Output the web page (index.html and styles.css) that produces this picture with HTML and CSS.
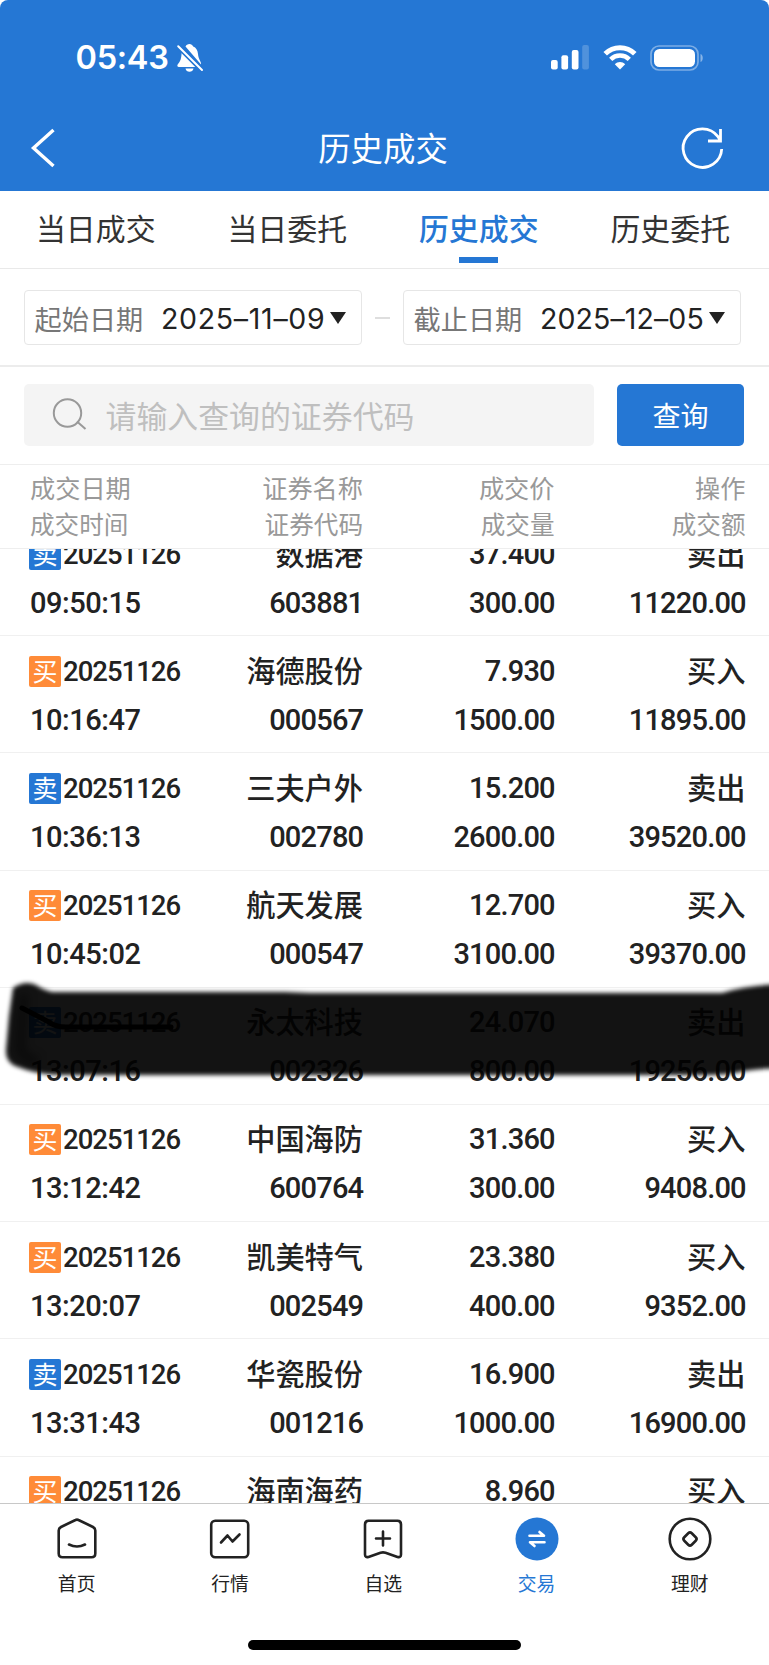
FILE: index.html
```html
<!DOCTYPE html>
<html lang="zh-CN">
<head>
<meta charset="utf-8">
<title>历史成交</title>
<link rel="stylesheet" href="styles.css">
</head>
<body>
<div class="app">
  <header class="header">
    <div class="status">
      <div class="status-left">
        <span class="clock">05:43</span>
        <svg class="bell" width="28" height="30" viewBox="0 0 28 30">
          <path fill="#fff" d="M13.500 1c-1.900 0-3.400 1-4 2.400L25 21.500c.8-2.500-2.600-4.500-3-10.500-.4-4-2-6.600-4.800-7.600C16.500 1.900 15.200 1 13.500 1zM5.600 10L19.500 24H3c-1.800 0-2.200-1.700-1-3 2.400-2.500 3.300-5.500 3.600-11zM9.500 25.500h8c-.5 2.200-2 3.300-4 3.300s-3.500-1.100-4-3.300z"/>
          <path d="M2.200 3.200L26 27" stroke="#2577d4" stroke-width="5"/>
          <path d="M2.200 3.200L26 27" stroke="#fff" stroke-width="2" stroke-linecap="round"/>
        </svg>
      </div>
      <div class="status-right">
        <svg width="38" height="25" viewBox="0 0 38 25" fill="#fff">
          <rect x="0" y="15" width="6.700" height="9.500" rx="2"/>
          <rect x="10.400" y="10.300" width="6.700" height="14.200" rx="2"/>
          <rect x="20.800" y="5" width="6.700" height="19.500" rx="2"/>
          <rect x="31.200" y="0" width="6.700" height="24.500" rx="2" opacity=".2"/>
        </svg>
        <svg class="wifi" width="34" height="25" viewBox="0 0 34 25" fill="none" stroke="#fff">
          <path d="M2.200 8.800C10.400.6 23.600.6 31.800 8.800" stroke-width="5"/>
          <path d="M7.700 14.300C12.900 9.300 21.100 9.300 26.300 14.300" stroke-width="4.600"/>
          <path d="M11.800 19.200c3-3.100 7.400-3.100 10.400 0L17 24.600z" fill="#fff" stroke="none"/>
        </svg>
        <svg class="battery" width="54" height="26" viewBox="0 0 54 26">
          <rect x="1" y="1" width="47" height="24" rx="8" fill="none" stroke="#fff" stroke-opacity=".4" stroke-width="1.700"/>
          <rect x="4" y="4" width="41" height="18" rx="5.500" fill="#fff"/>
          <path d="M50.500 9v8c3-1 3-7 0-8z" fill="#fff" opacity=".45"/>
        </svg>
      </div>
    </div>
    <div class="titlebar">
      <svg width="48" height="44" viewBox="0 0 48 44" fill="none" stroke="#fff" stroke-width="3.400"><path d="M24.500 4L4.500 22 24.500 40"/></svg>
      <h1 class="title">历史成交</h1>
      <svg width="48" height="44" viewBox="0 0 48 44" fill="none" stroke="#fff" stroke-width="2.800">
        <path d="M44.700 23A19.300 19.300 0 1 1 41 10.700L43.500 14.500M43.500 3V15H31"/>
      </svg>
    </div>
  </header>

  <nav class="tabs">
    <span class="tab">当日成交</span>
    <span class="tab">当日委托</span>
    <span class="tab tab-active">历史成交</span>
    <span class="tab">历史委托</span>
  </nav>

  <section class="dates">
    <div class="date"><span class="date-label">起始日期</span><span class="date-value date-from">2025–11–09</span><i class="caret"></i></div>
    <i class="dash"></i>
    <div class="date"><span class="date-label">截止日期</span><span class="date-value">2025–12–05</span><i class="caret"></i></div>
  </section>

  <section class="search">
    <div class="search-box">
      <svg width="36" height="36" viewBox="0 0 36 36" fill="none" stroke="#999" stroke-width="2"><circle cx="16.500" cy="16" r="13.700"/><path d="M26 24.500L34.500 32"/></svg>
      <span class="placeholder">请输入查询的证券代码</span>
    </div>
    <button class="query">查询</button>
  </section>

  <section class="thead">
    <div class="cell"><span>成交日期</span><span class="sub">成交时间</span></div>
    <div class="cell"><span>证券名称</span><span class="sub">证券代码</span></div>
    <div class="cell"><span>成交价</span><span class="sub">成交量</span></div>
    <div class="cell"><span>操作</span><span class="sub">成交额</span></div>
  </section>

  <main class="list">
    <div class="rows">
      <div class="row">
        <div class="cell"><span class="day"><b class="tag sell">卖</b>20251126</span><span class="time">09:50:15</span></div>
        <div class="cell"><span class="cn">数据港</span><span>603881</span></div>
        <div class="cell"><span>37.400</span><span>300.00</span></div>
        <div class="cell"><span class="cn">卖出</span><span>11220.00</span></div>
      </div>
      <div class="row">
        <div class="cell"><span class="day"><b class="tag buy">买</b>20251126</span><span class="time">10:16:47</span></div>
        <div class="cell"><span class="cn">海德股份</span><span>000567</span></div>
        <div class="cell"><span>7.930</span><span>1500.00</span></div>
        <div class="cell"><span class="cn">买入</span><span>11895.00</span></div>
      </div>
      <div class="row">
        <div class="cell"><span class="day"><b class="tag sell">卖</b>20251126</span><span class="time">10:36:13</span></div>
        <div class="cell"><span class="cn">三夫户外</span><span>002780</span></div>
        <div class="cell"><span>15.200</span><span>2600.00</span></div>
        <div class="cell"><span class="cn">卖出</span><span>39520.00</span></div>
      </div>
      <div class="row">
        <div class="cell"><span class="day"><b class="tag buy">买</b>20251126</span><span class="time">10:45:02</span></div>
        <div class="cell"><span class="cn">航天发展</span><span>000547</span></div>
        <div class="cell"><span>12.700</span><span>3100.00</span></div>
        <div class="cell"><span class="cn">买入</span><span>39370.00</span></div>
      </div>
      <div class="row">
        <div class="cell"><span class="day"><b class="tag sell">卖</b>20251126</span><span class="time">13:07:16</span></div>
        <div class="cell"><span class="cn">永太科技</span><span>002326</span></div>
        <div class="cell"><span>24.070</span><span>800.00</span></div>
        <div class="cell"><span class="cn">卖出</span><span>19256.00</span></div>
        <svg class="marker" width="769" height="110" viewBox="0 0 769 110">
          <defs>
            <filter id="soft" x="-5%" y="-10%" width="110%" height="120%"><feGaussianBlur stdDeviation="2.200"/></filter>
            <filter id="glow" x="-50%" y="-50%" width="200%" height="200%"><feGaussianBlur stdDeviation="5"/></filter>
          </defs>
          <path filter="url(#soft)" fill="#000" fill-opacity=".927" d="M13 7Q25-1 36 4Q43 9 52 11L285 11 310 12H722Q745 5 780 3V87Q750 88 735 92Q722 94 700 94H60Q35 93 18 86Q5 82 6 68L9 35Z"/>
          <path filter="url(#glow)" d="M24 13L20 68Q22 77 38 80" fill="none" stroke="#000" stroke-width="8" opacity=".5"/>
          <path d="M22 27L49 41Q55 46 66 46H171" fill="none" stroke="#000" stroke-width="5" stroke-linecap="round"/>
        </svg>
      </div>
      <div class="row">
        <div class="cell"><span class="day"><b class="tag buy">买</b>20251126</span><span class="time">13:12:42</span></div>
        <div class="cell"><span class="cn">中国海防</span><span>600764</span></div>
        <div class="cell"><span>31.360</span><span>300.00</span></div>
        <div class="cell"><span class="cn">买入</span><span>9408.00</span></div>
      </div>
      <div class="row">
        <div class="cell"><span class="day"><b class="tag buy">买</b>20251126</span><span class="time">13:20:07</span></div>
        <div class="cell"><span class="cn">凯美特气</span><span>002549</span></div>
        <div class="cell"><span>23.380</span><span>400.00</span></div>
        <div class="cell"><span class="cn">买入</span><span>9352.00</span></div>
      </div>
      <div class="row">
        <div class="cell"><span class="day"><b class="tag sell">卖</b>20251126</span><span class="time">13:31:43</span></div>
        <div class="cell"><span class="cn">华瓷股份</span><span>001216</span></div>
        <div class="cell"><span>16.900</span><span>1000.00</span></div>
        <div class="cell"><span class="cn">卖出</span><span>16900.00</span></div>
      </div>
      <div class="row">
        <div class="cell"><span class="day"><b class="tag buy">买</b>20251126</span></div>
        <div class="cell"><span class="cn">海南海药</span></div>
        <div class="cell"><span>8.960</span></div>
        <div class="cell"><span class="cn">买入</span></div>
      </div>
    </div>
  </main>

  <footer class="bottom">
    <div class="nav">
      <div class="nav-item">
        <svg width="46" height="46" viewBox="0 0 46 46" fill="none" stroke="#222" stroke-width="2.600" stroke-linecap="round" stroke-linejoin="round"><path d="M21.500 4Q23 3.200 24.500 4L39 11Q41.300 12.300 41.300 14.500V37.500Q41.300 41.300 37.500 41.300H8.500Q4.700 41.300 4.700 37.500V14.500Q4.700 12.300 7 11ZM15 28.500Q23 32.500 31 28.500"/></svg>
        <span>首页</span>
      </div>
      <div class="nav-item">
        <svg width="46" height="46" viewBox="0 0 46 46" fill="none" stroke="#222" stroke-width="2.600" stroke-linecap="round" stroke-linejoin="round"><rect x="4.200" y="4.700" width="37" height="36.600" rx="4"/><path d="M14 26.500L20.500 19.500 25.500 25.500 32.500 18.500"/></svg>
        <span>行情</span>
      </div>
      <div class="nav-item">
        <svg width="46" height="46" viewBox="0 0 46 46" fill="none" stroke="#222" stroke-width="2.600" stroke-linecap="round" stroke-linejoin="round"><path d="M8.500 4.700H37.500Q41 4.700 41 8.500V38.500Q41 41.800 37.500 40.900L25.500 36.700Q23 36 20.500 36.700L8.500 40.900Q5 41.800 5 38.500V8.500Q5 4.700 8.500 4.700ZM23 15.500V29.500M16 22.500H30"/></svg>
        <span>自选</span>
      </div>
      <div class="nav-item nav-active">
        <svg width="46" height="46" viewBox="0 0 46 46"><circle cx="23" cy="23" r="21.500" fill="#2577d4"/><path d="M15.500 19.800H30L25.500 16M30.500 26.300H16L20.500 30" fill="none" stroke="#fff" stroke-width="2.600" stroke-linecap="round" stroke-linejoin="round"/></svg>
        <span>交易</span>
      </div>
      <div class="nav-item">
        <svg width="46" height="46" viewBox="0 0 46 46" fill="none" stroke="#222" stroke-width="2.600"><circle cx="23" cy="23" r="20.300"/><rect x="17.700" y="17.700" width="10.600" height="10.600" rx="2.500" transform="rotate(45 23 23)"/></svg>
        <span>理财</span>
      </div>
    </div>
    <i class="home-bar"></i>
  </footer>
</div>
</body>
</html>
```

FILE: styles.css
```css
* { box-sizing: border-box; }
body { margin: 0; background: #fff; }
.app {
  width: 769px;
  height: 1665px;
  display: flex;
  flex-direction: column;
  overflow: hidden;
  color: #222;
  font-family: "Noto Sans CJK SC", sans-serif;
}
svg { display: block; flex: none; overflow: visible; }

.header { height: 191px; flex: none; background: #2577d4; border-radius: 8px 8px 0 0; color: #fff; }
.status { height: 105px; padding: 10px 65px 0 75.5px; display: flex; justify-content: space-between; align-items: center; }
.status-left, .status-right { display: flex; align-items: center; }
.clock { font: 600 32.5px/40px Inter, sans-serif; letter-spacing: -0.3px; width: 94px; padding-top: 1px; white-space: nowrap; }
.bell { margin-left: 6.5px; }
.wifi { margin-left: 14px; }
.battery { margin-left: 13px; }
.titlebar { height: 86px; padding: 0 44px 0 29px; display: flex; justify-content: space-between; align-items: center; }
.title { margin: 0 0 3px 12px; font-size: 32.4px; font-weight: 400; line-height: 44px; }

.tabs { height: 78px; flex: none; padding-right: 3px; display: grid; grid-template-columns: repeat(4, 1fr); border-bottom: 1.5px solid #e9e9e9; }
.tab { display: flex; flex-direction: column; align-items: center; font-size: 29.9px; line-height: 40px; padding-top: 15.5px; color: #333; }
.tab-active { color: #2577d4; font-weight: 500; }
.tab-active::after { content: ""; width: 39px; height: 6px; margin-top: 10.5px; background: #2577d4; }

.dates { height: 97.5px; flex: none; padding: 1.5px 28px 0 24px; display: flex; align-items: center; justify-content: space-between; border-bottom: 2px solid #ececec; }
.date { width: 338px; height: 55px; padding-left: 9.5px; border: 1.5px solid #e6e6e6; border-radius: 4px; display: flex; align-items: center; }
.date-label { width: 126.5px; font-size: 27.2px; color: #777; }
.date-value { width: 165px; padding-top: 3px; font: 400 28.5px/36px Inter, sans-serif; letter-spacing: 0.1px; white-space: nowrap; }
.date-from { letter-spacing: 0.7px; }
.caret { margin-left: 4px; border: 8px solid transparent; border-top: 12px solid #222; border-bottom: 0; }
.dash { width: 15px; height: 2px; background: #dedede; }

.search { height: 98.5px; flex: none; padding: 0 25px 0 24px; display: flex; align-items: center; justify-content: space-between; border-bottom: 1px solid #eee; }
.search-box { width: 570px; height: 62px; padding-left: 26.5px; border-radius: 5px; background: #f4f4f4; display: flex; align-items: center; gap: 19px; }
.placeholder { font-size: 30.9px; line-height: 44px; padding-bottom: 1px; color: #bfbfbf; }
.query { width: 127px; height: 62px; padding: 0; border: 0; border-radius: 5px; background: #2577d4; color: #fff; font: 400 28px/40px "Noto Sans CJK SC", sans-serif; }

.thead, .row { display: grid; grid-template-columns: 169.3px 163.7px 191.5px 191px; padding-left: 30px; }
.cell { display: flex; flex-direction: column; align-items: flex-end; }
.cell:first-child { align-items: flex-start; }
.thead { height: 84px; flex: none; padding-top: 3.5px; border-bottom: 1px solid #eee; font-size: 25.2px; line-height: 36px; color: #999; }
.sub { font-size: 24.600px; }

.list { height: 954px; flex: none; overflow: hidden; }
.rows { margin-top: -30px; }
.row {
  height: 117.2px;
  position: relative;
  padding-top: 10.5px;
  border-bottom: 1px solid #f0f0f0;
  font: 500 29px/49px Roboto, "Noto Sans CJK SC", sans-serif;
}
.cell > span { white-space: nowrap; }
.row .cell > span { letter-spacing: -0.8px; margin-right: -0.3px; }
.row .cell .time { letter-spacing: -0.45px; }
.row .cell .cn { font-size: 29.200px; letter-spacing: 0; margin-right: 0; transform: translateY(1px); }
.row .cell .day { display: flex; align-items: center; font-size: 27.5px; letter-spacing: -1px; margin-left: -1px; }
.tag { width: 32px; height: 31px; margin-right: 2px; border-radius: 2px; color: #fff; font: 400 25px/29px "Noto Sans CJK SC", sans-serif; text-align: center; letter-spacing: 0; }
.buy { background: #ff8b38; }
.sell { background: #2577d4; }
.marker { position: absolute; left: 0; top: -7px; }

.bottom { flex: 1; border-top: 1.5px solid #c8c8c8; display: flex; flex-direction: column; align-items: center; background: #fff; }
.nav { width: 769px; height: 135.5px; padding: 12px 2.5px 0 0; display: grid; grid-template-columns: repeat(5, 1fr); }
.nav-item { display: flex; flex-direction: column; align-items: center; font-size: 18.8px; line-height: 28px; gap: 7px; }
.nav-active { color: #2577d4; }
.home-bar { width: 273px; height: 10px; border-radius: 5px; background: #000; }
```
